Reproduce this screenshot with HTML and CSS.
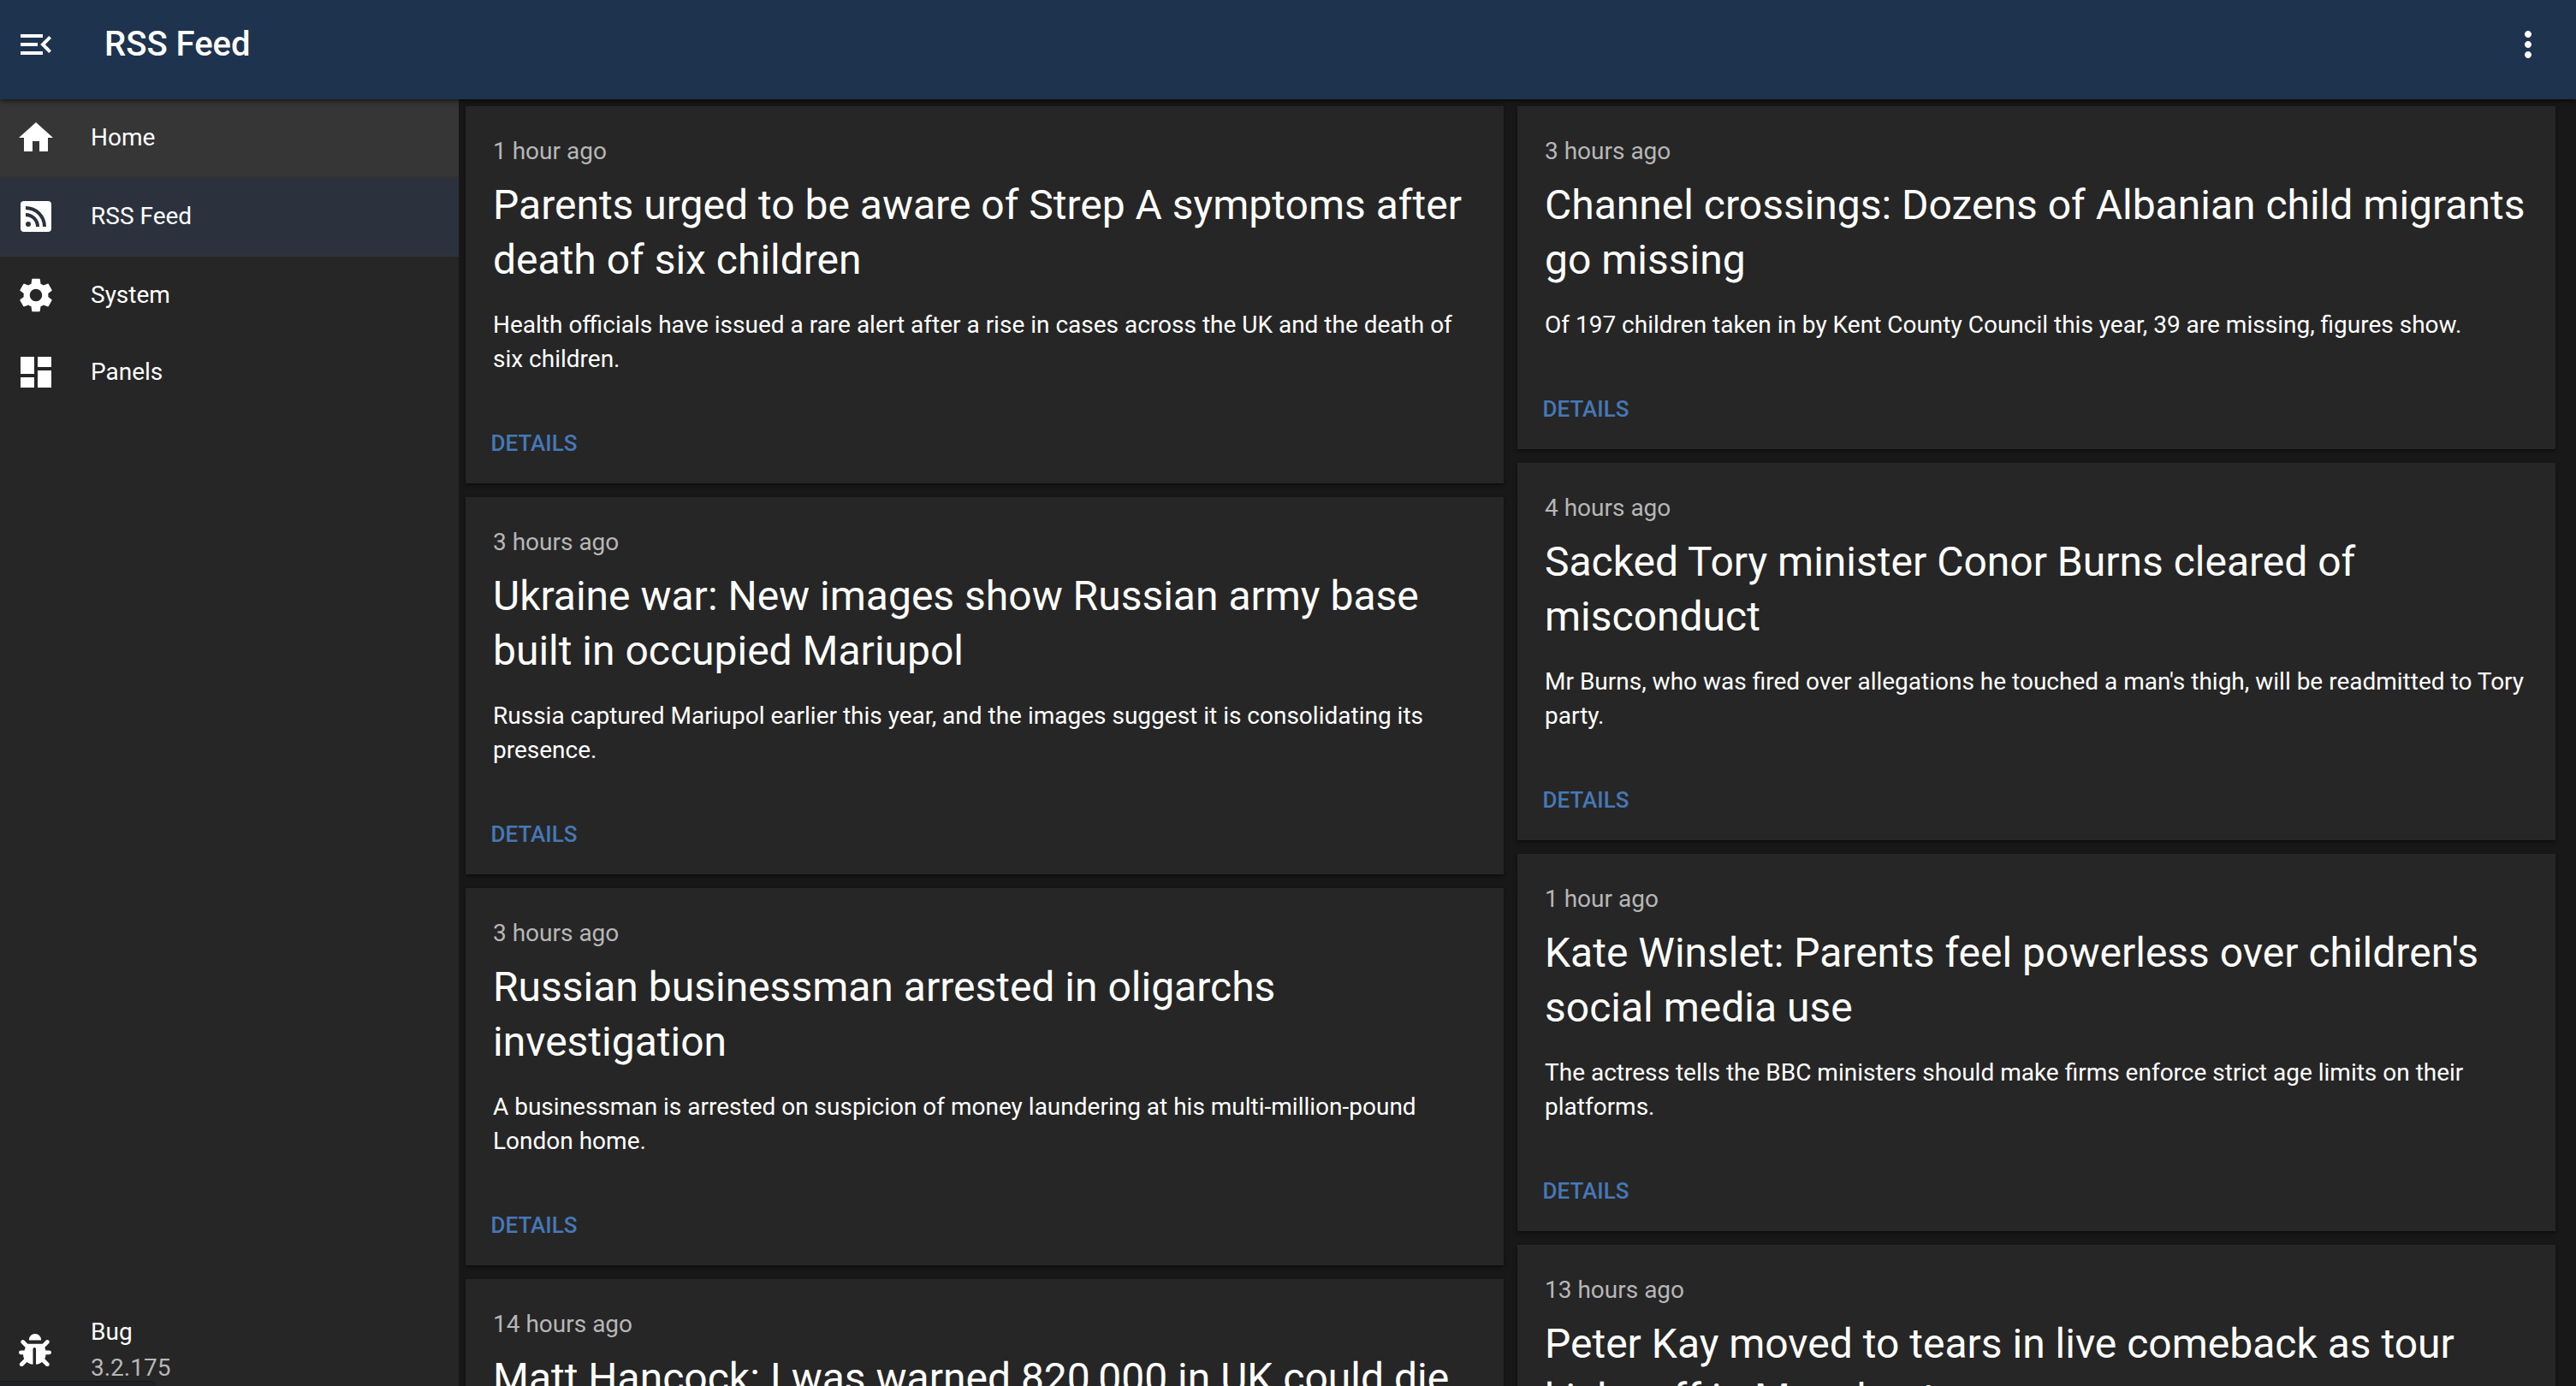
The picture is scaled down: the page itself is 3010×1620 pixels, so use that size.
FILE: index.html
```html
<!DOCTYPE html>
<html lang="en">
<head>
<meta charset="utf-8">
<title>RSS Feed</title>
<link rel="stylesheet" href="styles.css">
</head>
<body>
<div class="app">
  <header class="topbar">
    <button class="icon-button" type="button" aria-label="Close menu">
      <svg class="icon" viewBox="0 0 24 24"><path d="M3 18h13v-2H3v2zm0-5h10v-2H3v2zm0-7v2h13V6H3zm18 9.59L17.42 12 21 8.41 19.59 7l-5 5 5 5L21 15.59z"/></svg>
    </button>
    <h1 class="topbar-title">RSS Feed</h1>
    <button class="icon-button" type="button" aria-label="More options">
      <svg class="icon" viewBox="0 0 24 24"><path d="M12 8c1.100 0 2-.9 2-2s-.9-2-2-2-2 .9-2 2 .9 2 2 2zm0 2c-1.100 0-2 .9-2 2s.9 2 2 2 2-.9 2-2-.9-2-2-2zm0 6c-1.100 0-2 .9-2 2s.9 2 2 2 2-.9 2-2-.9-2-2-2z"/></svg>
    </button>
  </header>
  <div class="body">
    <nav class="sidebar">
      <a class="nav-item nav-item-hover" href="#home">
        <svg class="icon" viewBox="0 0 24 24"><path d="M10 20v-6h4v6h5v-8h3L12 3 2 12h3v8z"/></svg>
        <span>Home</span>
      </a>
      <a class="nav-item nav-item-active" href="#rss">
        <svg class="icon" viewBox="0 0 24 24"><path fill-rule="evenodd" d="M5 3h14a2 2 0 0 1 2 2v14a2 2 0 0 1-2 2H5a2 2 0 0 1-2-2V5a2 2 0 0 1 2-2zM7.500 15A1.500 1.500 0 0 0 6 16.500 1.500 1.500 0 0 0 7.500 18 1.500 1.500 0 0 0 9 16.500 1.500 1.500 0 0 0 7.500 15zM6 10v2a6 6 0 0 1 6 6h2a8 8 0 0 0-8-8zM6 6v2a10 10 0 0 1 10 10h2A12 12 0 0 0 6 6z"/></svg>
        <span>RSS Feed</span>
      </a>
      <a class="nav-item" href="#system">
        <svg class="icon" viewBox="0 0 24 24"><path d="M19.140 12.940c.04-.3.060-.610.060-.940 0-.320-.020-.640-.070-.940l2.030-1.580c.180-.140.230-.410.120-.610l-1.920-3.320c-.120-.220-.370-.290-.590-.220l-2.390.960c-.5-.380-1.030-.7-1.620-.940l-.360-2.540c-.04-.240-.240-.410-.480-.410h-3.840c-.240 0-.430.170-.470.410l-.360 2.540c-.590.240-1.130.570-1.620.940l-2.390-.960c-.220-.080-.470 0-.590.220L2.740 8.870c-.120.210-.080.470.120.610l2.030 1.580c-.05.3-.09.630-.09.940s.020.640.070.940l-2.030 1.580c-.180.140-.230.410-.120.610l1.920 3.320c.120.220.370.290.590.220l2.390-.960c.5.380 1.030.7 1.620.940l.360 2.540c.05.240.240.410.480.410h3.840c.240 0 .440-.170.470-.410l.360-2.540c.590-.240 1.130-.560 1.620-.940l2.390.960c.220.080.470 0 .590-.220l1.920-3.320c.120-.220.070-.470-.120-.610l-2.010-1.580zM12 15.600c-1.980 0-3.600-1.620-3.600-3.600s1.620-3.600 3.600-3.600 3.600 1.620 3.600 3.600-1.620 3.600-3.600 3.600z"/></svg>
        <span>System</span>
      </a>
      <a class="nav-item" href="#panels">
        <svg class="icon" viewBox="0 0 24 24"><path d="M3 13h8V3H3v10zm0 8h8v-6H3v6zm10 0h8V11h-8v10zm0-18v6h8V3h-8z"/></svg>
        <span>Panels</span>
      </a>
      <div class="version">
        <svg class="bug-icon" viewBox="0 0 512 512"><path d="M256 0c53 0 96 43 96 96v4H160v-4c0-53 43-96 96-96zM41 105a32 32 0 0 1 46 0l52 52h234l52-52a32 32 0 0 1 46 46l-64 64c8 14 14 30 17 47h56a32 32 0 0 1 0 64h-56c0 25-6 48-16 69l63 63a32 32 0 0 1-46 46l-60-60c-26 22-60 34-95 36V240a24 24 0 0 0-48 0v240c-35-2-69-14-95-36l-60 60a32 32 0 0 1-46-46l63-63c-10-21-16-44-16-69H32a32 32 0 0 1 0-64h56c3-17 9-33 17-47l-64-64a32 32 0 0 1 0-46z"/></svg>
        <div><div>Bug</div><div class="muted">3.2.175</div></div>
      </div>
    </nav>
    <main class="feed">
      <div class="column">
        <article class="card">
          <div class="card-content"><p class="date">1 hour ago</p><h2 class="title">Parents urged to be aware of Strep A symptoms after death of six children</h2><p class="summary">Health officials have issued a rare alert after a rise in cases across the UK and the death of six children.</p></div>
          <div class="card-actions"><button class="details" type="button">DETAILS</button></div>
        </article>
        <article class="card">
          <div class="card-content"><p class="date">3 hours ago</p><h2 class="title">Ukraine war: New images show Russian army base built in occupied Mariupol</h2><p class="summary">Russia captured Mariupol earlier this year, and the images suggest it is consolidating its presence.</p></div>
          <div class="card-actions"><button class="details" type="button">DETAILS</button></div>
        </article>
        <article class="card">
          <div class="card-content"><p class="date">3 hours ago</p><h2 class="title">Russian businessman arrested in oligarchs investigation</h2><p class="summary">A businessman is arrested on suspicion of money laundering at his multi-million-pound London home.</p></div>
          <div class="card-actions"><button class="details" type="button">DETAILS</button></div>
        </article>
        <article class="card">
          <div class="card-content"><p class="date">14 hours ago</p><h2 class="title">Matt Hancock: I was warned 820,000 in UK could die</h2></div>
          <div class="card-actions"><button class="details" type="button">DETAILS</button></div>
        </article>
      </div>
      <div class="column">
        <article class="card">
          <div class="card-content"><p class="date">3 hours ago</p><h2 class="title">Channel crossings: Dozens of Albanian child migrants go missing</h2><p class="summary">Of 197 children taken in by Kent County Council this year, 39 are missing, figures show.</p></div>
          <div class="card-actions"><button class="details" type="button">DETAILS</button></div>
        </article>
        <article class="card">
          <div class="card-content"><p class="date">4 hours ago</p><h2 class="title">Sacked Tory minister Conor Burns cleared of misconduct</h2><p class="summary">Mr Burns, who was fired over allegations he touched a man's thigh, will be readmitted to Tory party.</p></div>
          <div class="card-actions"><button class="details" type="button">DETAILS</button></div>
        </article>
        <article class="card">
          <div class="card-content"><p class="date">1 hour ago</p><h2 class="title">Kate Winslet: Parents feel powerless over children's social media use</h2><p class="summary">The actress tells the BBC ministers should make firms enforce strict age limits on their platforms.</p></div>
          <div class="card-actions"><button class="details" type="button">DETAILS</button></div>
        </article>
        <article class="card">
          <div class="card-content"><p class="date">13 hours ago</p><h2 class="title">Peter Kay moved to tears in live comeback as tour kicks off in Manchester</h2></div>
          <div class="card-actions"><button class="details" type="button">DETAILS</button></div>
        </article>
      </div>
    </main>
  </div>
  <div class="link-hint"></div>
</div>
</body>
</html>
```
FILE: styles.css
```css
* { box-sizing: border-box; }

body {
  margin: 0;
  background: #181818;
  color: #fff;
  font-family: Roboto, "Liberation Sans", sans-serif;
  font-size: 28px;
  line-height: 40px;
}

h1, h2, p { margin: 0; font-weight: 400; }
button { border: 0; background: none; color: inherit; font: inherit; cursor: pointer; }

.app { display: flex; flex-direction: column; height: 100vh; overflow: hidden; position: relative; }

.topbar {
  display: flex;
  align-items: flex-start;
  flex: none;
  height: 116px;
  padding: 16px 20px 0 6px;
  background: #1e334e;
  box-shadow: 0 2px 6px rgba(0, 0, 0, .6);
  position: relative;
}
.icon-button { display: flex; padding: 12px; }
.icon { width: 48px; height: 48px; flex: none; fill: #fff; }
.topbar-title { flex: 1; padding: 4px 0 0 44px; font-size: 40px; line-height: 64px; font-weight: 500; }

.body { display: flex; flex: 1; min-height: 0; }

.sidebar {
  display: flex;
  flex-direction: column;
  flex: none;
  width: 536px;
  background: #262626;
}
.nav-item {
  display: flex;
  align-items: center;
  gap: 40px;
  height: 90px;
  padding-left: 18px;
  color: #fff;
  text-decoration: none;
}
.nav-item-hover { height: 92px; background: #363636; border-bottom: 2px solid #333; }
.nav-item-active { height: 92px; background: #2b323e; border-bottom: 2px solid #333; }

.version { display: flex; align-items: center; gap: 46px; margin-top: auto; padding: 0 22px; line-height: 42px; }
.bug-icon { width: 38px; height: 38px; fill: #fff; }
.muted { color: #b7b7b7; }

.feed { display: flex; flex: 1; gap: 16px; min-width: 0; padding: 8px 24px 0 8px; overflow: hidden; }
.column { display: flex; flex-direction: column; flex: 1; min-width: 0; gap: 16px; }
.card { flex: none; background: #262626; box-shadow: 0 2px 4px rgba(0, 0, 0, .5); }
.card-content { padding: 33px 32px 31px; }
.date { margin-bottom: 11px; color: #b7b7b7; }
.title { margin-bottom: 24px; font-size: 48px; line-height: 64px; }
.card-actions { display: flex; padding: 16px; }
.details { min-width: 128px; padding: 8px 10px; color: #4678b6; font-size: 26px; line-height: 46px; font-weight: 500; }

/* Top edge of the link address bubble in the window corner */
.link-hint {
  position: absolute;
  left: 0;
  bottom: 0;
  width: 182px;
  height: 6px;
  background: #202126;
  border-top: 1px solid #181818;
  border-radius: 0 6px 0 0;
}
```
